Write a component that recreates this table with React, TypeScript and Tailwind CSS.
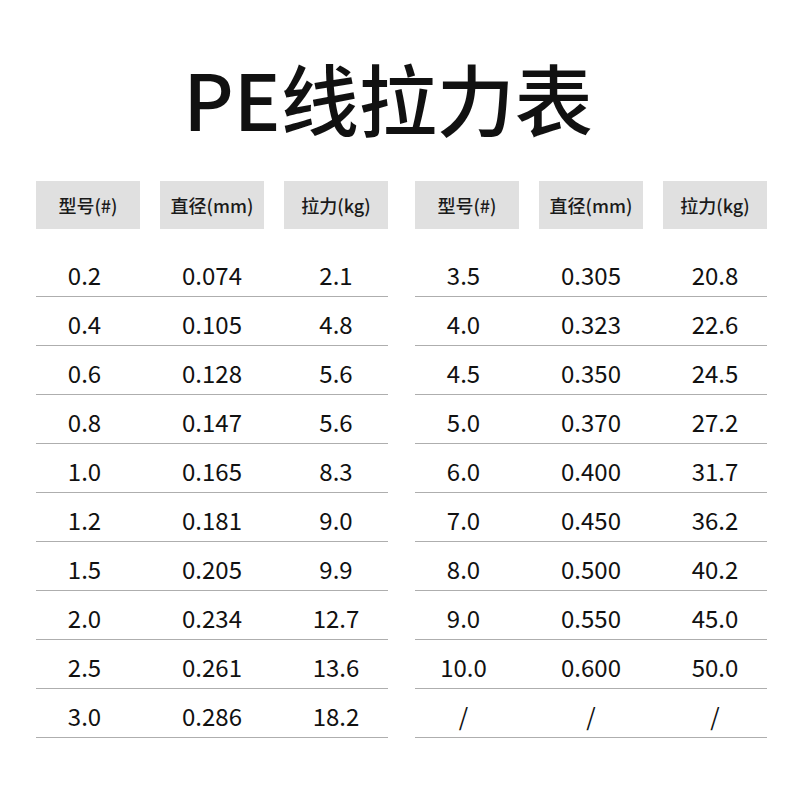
import React from "react";

const left: [string, string, string][] = [
  ["0.2", "0.074", "2.1"],
  ["0.4", "0.105", "4.8"],
  ["0.6", "0.128", "5.6"],
  ["0.8", "0.147", "5.6"],
  ["1.0", "0.165", "8.3"],
  ["1.2", "0.181", "9.0"],
  ["1.5", "0.205", "9.9"],
  ["2.0", "0.234", "12.7"],
  ["2.5", "0.261", "13.6"],
  ["3.0", "0.286", "18.2"],
];

const right: [string, string, string][] = [
  ["3.5", "0.305", "20.8"],
  ["4.0", "0.323", "22.6"],
  ["4.5", "0.350", "24.5"],
  ["5.0", "0.370", "27.2"],
  ["6.0", "0.400", "31.7"],
  ["7.0", "0.450", "36.2"],
  ["8.0", "0.500", "40.2"],
  ["9.0", "0.550", "45.0"],
  ["10.0", "0.600", "50.0"],
  ["/", "/", "/"],
];

const headers = ["型号(#)", "直径(mm)", "拉力(kg)"];

function Table({ rows }: { rows: [string, string, string][] }) {
  return (
    <div className="w-[352px] flex flex-col">
      <div className="grid grid-cols-[104px_104px_104px] gap-x-[20px]">
        {headers.map((h) => (
          <div
            key={h}
            className="h-[48px] bg-[#e0e0e0] flex items-center justify-center text-[18px] text-[#1a1a1a] font-medium leading-none"
          >
            {h}
          </div>
        ))}
      </div>
      <div className="mt-[19px] flex flex-col">
        {rows.map((r, i) => (
          <div
            key={i}
            className="h-[49px] border-b border-[#aeaeae] grid grid-cols-[104px_104px_104px] gap-x-[20px] items-center"
          >
            <div className="text-center text-[24px] leading-none text-[#111] pt-[6px] pr-[7px]">{r[0]}</div>
            <div className="text-center text-[24px] leading-none text-[#111] pt-[6px]">{r[1]}</div>
            <div className="text-center text-[24px] leading-none text-[#111] pt-[6px]">{r[2]}</div>
          </div>
        ))}
      </div>
    </div>
  );
}

export default function App() {
  return (
    <div
      className="w-[800px] h-[800px] bg-white overflow-hidden"
      style={{ fontFamily: '"Noto Sans CJK SC", "Noto Sans", sans-serif' }}
    >
      <div className="h-[181px] flex items-start justify-center pr-[24px] pt-[58px]">
        <div className="text-[78px] leading-none font-medium text-[#111]">PE线拉力表</div>
      </div>
      <div className="flex pl-[36px] gap-x-[27px]">
        <Table rows={left} />
        <Table rows={right} />
      </div>
    </div>
  );
}
